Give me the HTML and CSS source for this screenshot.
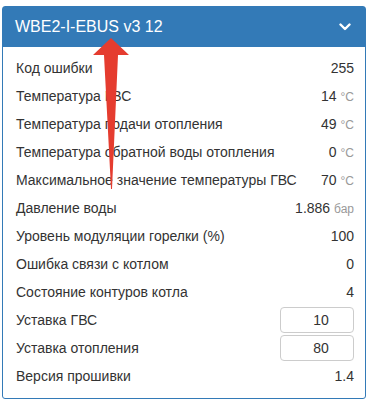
FILE: index.html
```html
<!DOCTYPE html>
<html lang="en">
<head>
    <meta charset="UTF-8">
    <meta name="viewport" content="width=device-width, initial-scale=1.0">
    <title>WBE2-I-EBUS</title>
    <link rel="stylesheet" href="styles.css">
</head>
<body>
    <div class="panel">
        <div class="panel-heading">
            <span class="panel-title">WBE2-I-EBUS v3 12</span>
            <svg class="chevron" width="12" height="8" viewBox="0 0 12 8">
                <path d="M1.5 1.5 L6 6 L10.5 1.5" fill="none" stroke="#fff" stroke-width="2.4" stroke-linecap="round" stroke-linejoin="round"/>
            </svg>
        </div>
        <div class="panel-body">
            <div class="row"><span class="label">Код ошибки</span><span class="value">255</span></div>
            <div class="row"><span class="label">Температура ГВС</span><span class="value">14 <span class="unit">°C</span></span></div>
            <div class="row"><span class="label">Температура подачи отопления</span><span class="value">49 <span class="unit">°C</span></span></div>
            <div class="row"><span class="label">Температура обратной воды отопления</span><span class="value">0 <span class="unit">°C</span></span></div>
            <div class="row"><span class="label">Максимальное значение температуры ГВС</span><span class="value">70 <span class="unit">°C</span></span></div>
            <div class="row"><span class="label">Давление воды</span><span class="value">1.886 <span class="unit">бар</span></span></div>
            <div class="row"><span class="label">Уровень модуляции горелки (%)</span><span class="value">100</span></div>
            <div class="row"><span class="label">Ошибка связи с котлом</span><span class="value">0</span></div>
            <div class="row"><span class="label">Состояние контуров котла</span><span class="value">4</span></div>
            <div class="row"><span class="label">Уставка ГВС</span><input class="field" type="text" value="10"></div>
            <div class="row"><span class="label">Уставка отопления</span><input class="field" type="text" value="80"></div>
            <div class="row"><span class="label">Версия прошивки</span><span class="value">1.4</span></div>
        </div>
    </div>

    <svg class="arrow" width="40" height="160" viewBox="0 0 40 160">
        <path d="M19 0 L37 17 L26 17 L20 151 L19 151 L12 17 L1 17 Z" fill="#e53c2f"/>
    </svg>
</body>
</html>
```

FILE: styles.css
```css
body {
    margin: 0;
    padding: 6px 11px 0 2px;
    font-family: "Liberation Sans", Arial, sans-serif;
    font-size: 14px;
    color: #333;
    background: #fff;
}
.panel {
    border: 1px solid #337ab7;
    border-radius: 3px;
}
.panel-heading {
    display: flex;
    justify-content: space-between;
    align-items: center;
    height: 40px;
    padding: 0 14px 0 12px;
    background-color: #337ab7;
    color: #fff;
}
.panel-title {
    font-size: 16px;
}
.panel-body {
    padding: 7px 11px 8px 13px;
}
.row {
    display: flex;
    justify-content: space-between;
    align-items: center;
    height: 28px;
}
.value {
    white-space: nowrap;
}
.unit {
    font-size: 12px;
    color: #999;
}
.field {
    width: 74px;
    height: 26px;
    box-sizing: border-box;
    border: 1px solid #ccc;
    border-radius: 4px;
    padding: 0 4px 0 12px;
    font-family: inherit;
    font-size: 14px;
    color: #333;
    text-align: center;
    outline: none;
}
.arrow {
    position: absolute;
    left: 92px;
    top: 38px;
}
```
